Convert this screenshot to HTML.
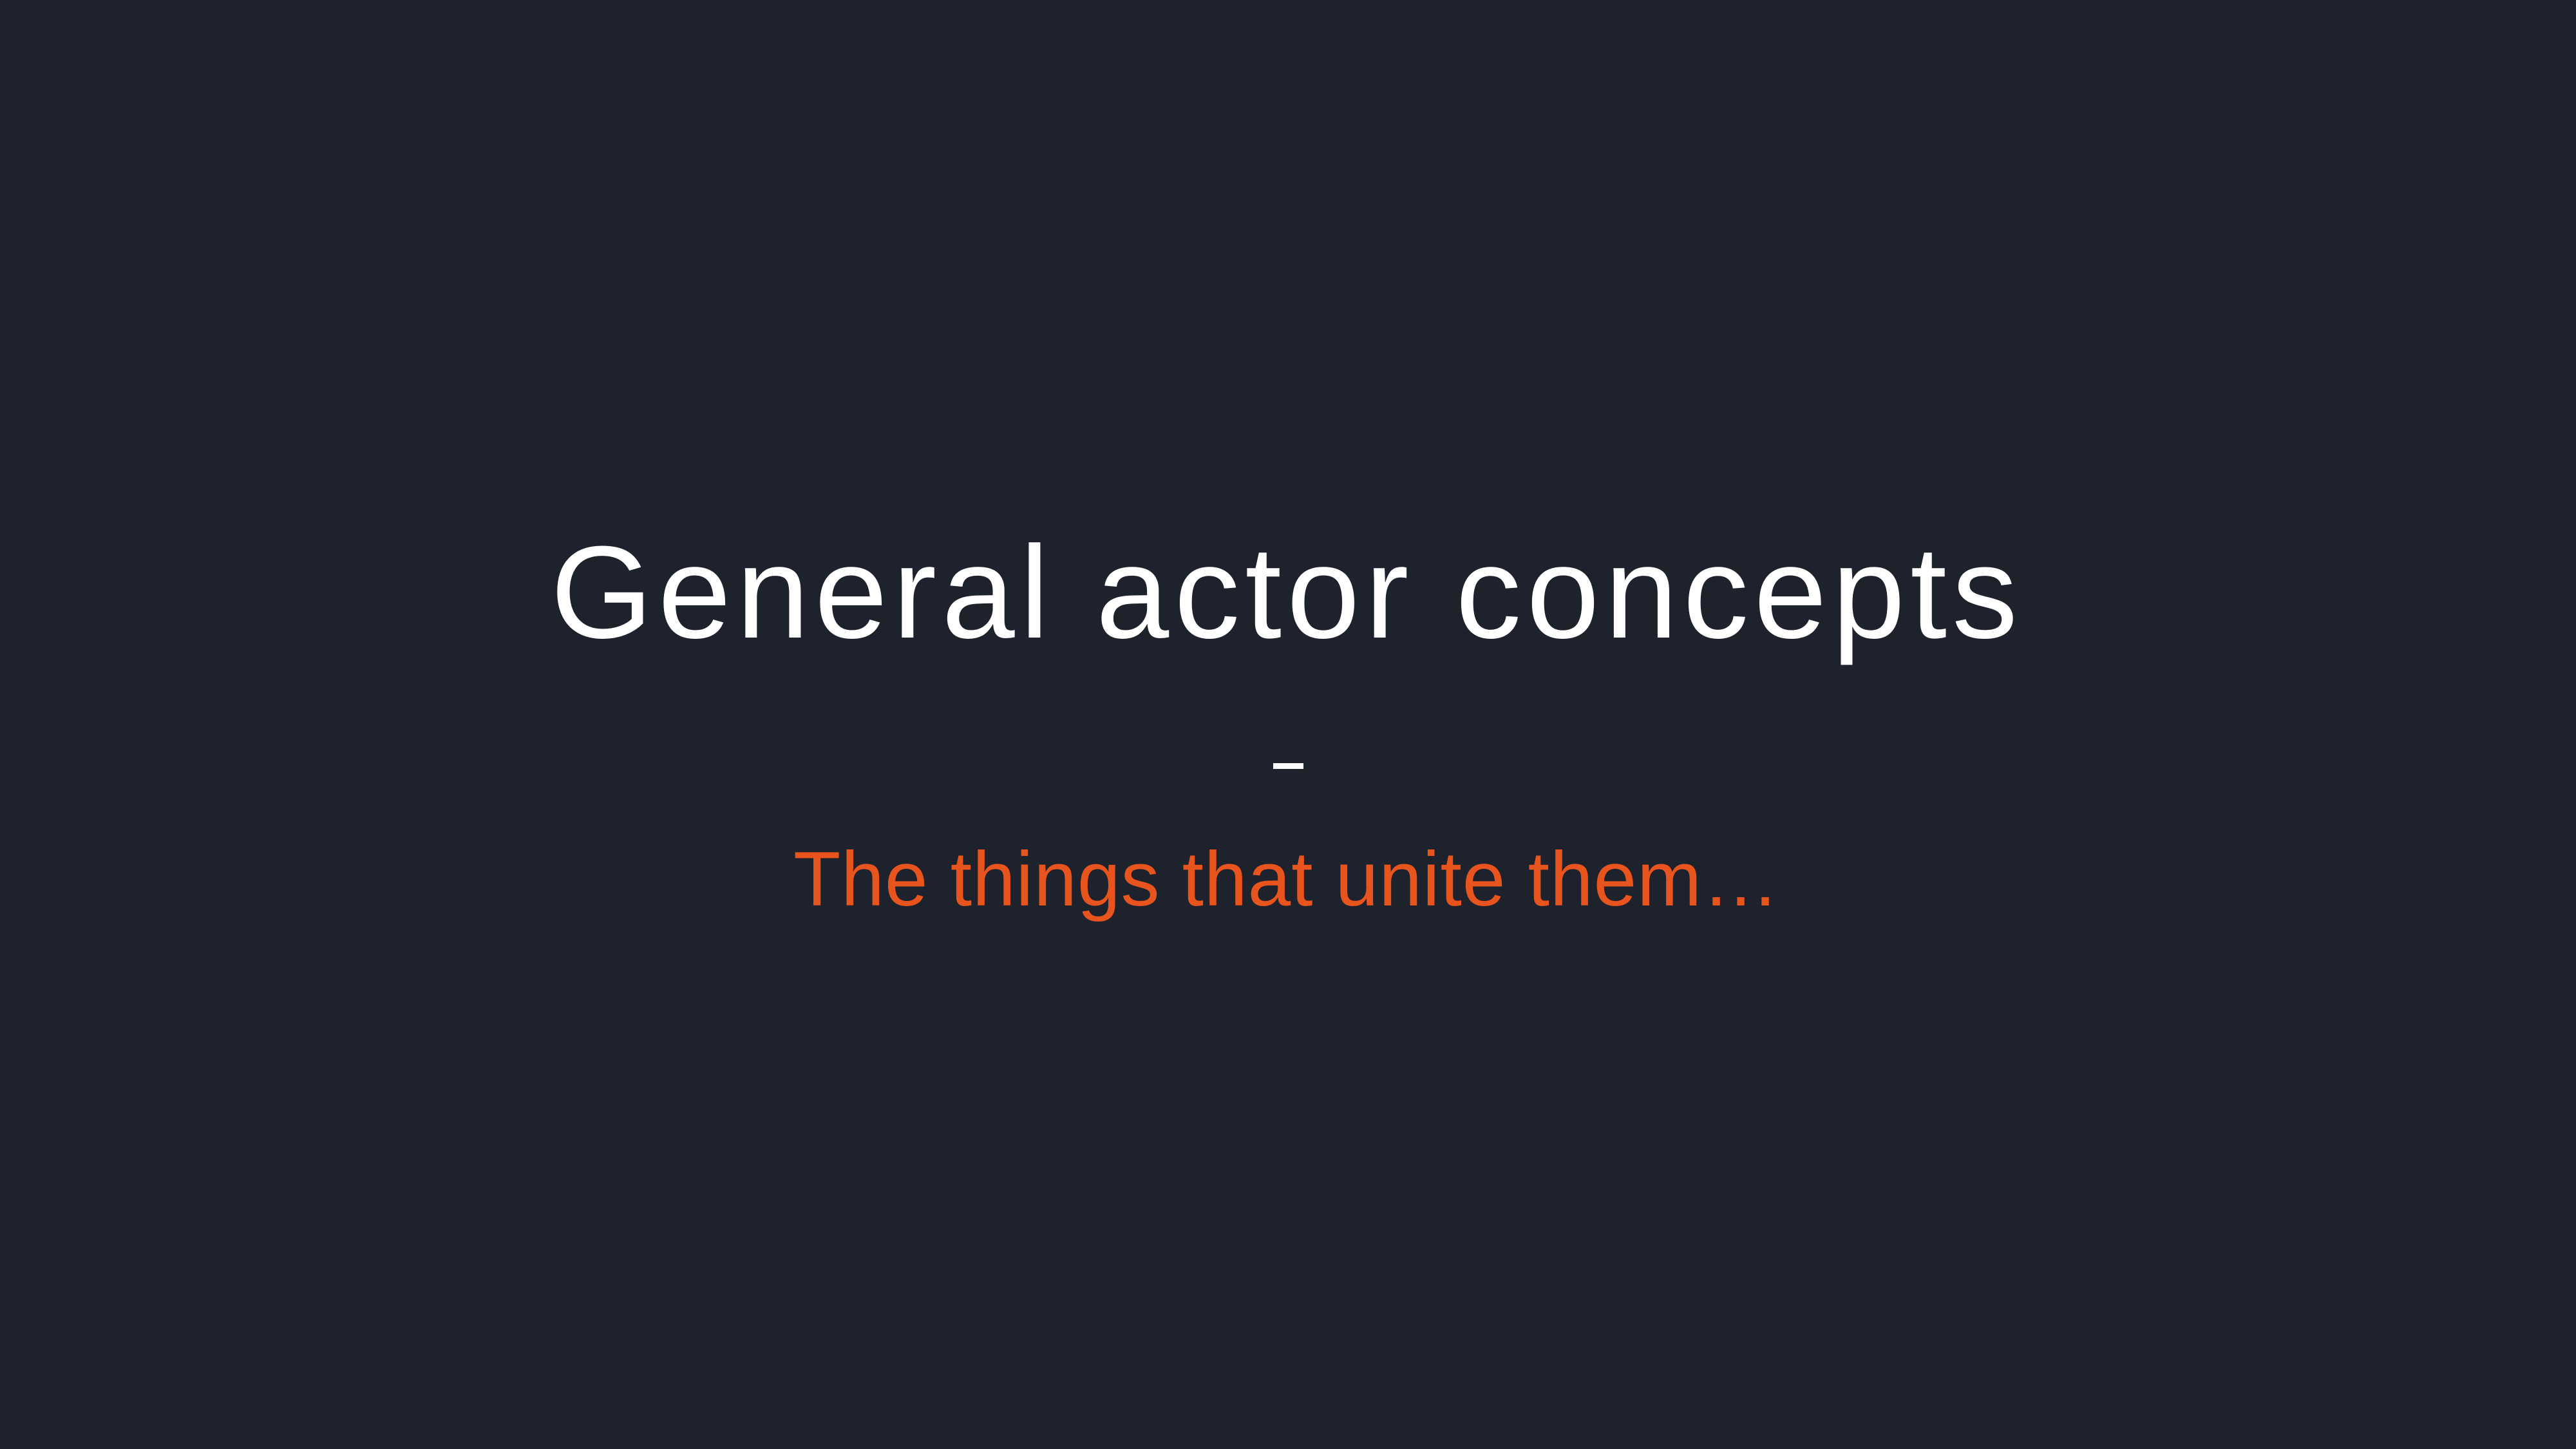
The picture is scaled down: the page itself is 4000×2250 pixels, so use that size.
<!DOCTYPE html>
<html><head><meta charset="utf-8"><style>
html,body{margin:0;padding:0;background:#1e222c;width:4000px;height:2250px;overflow:hidden}
svg{display:block}
</style></head><body>
<svg width="4000" height="2250" xmlns="http://www.w3.org/2000/svg">
<rect width="4000" height="2250" fill="#1e222c"/>
<text x="855" y="990" font-family="Liberation Sans, sans-serif" font-size="204" fill="#ffffff" textLength="2278" lengthAdjust="spacing">General actor concepts</text>
<rect x="1977" y="1185" width="47" height="9" fill="#ffffff"/>
<text x="1232" y="1406" font-family="Liberation Sans, sans-serif" font-size="120" fill="#e8541e" textLength="1531" lengthAdjust="spacing">The things that unite them…</text>
</svg>
</body></html>
